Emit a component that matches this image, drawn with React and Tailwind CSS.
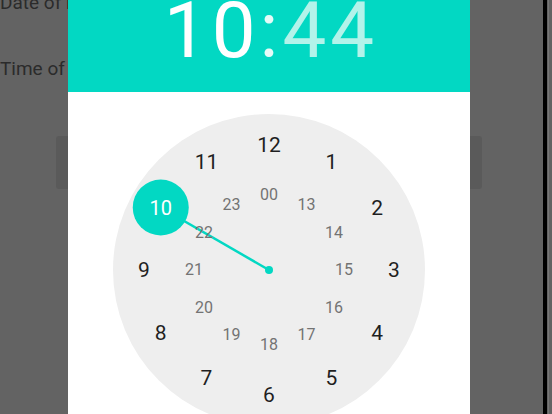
import React from 'react';

const TEAL = '#02d8c3';

const outer = [12, 1, 2, 3, 4, 5, 6, 7, 8, 9, 10, 11];
const inner = ['00', '13', '14', '15', '16', '17', '18', '19', '20', '21', '22', '23'];

function pos(i, r) {
  const a = (i * 30 * Math.PI) / 180;
  return { left: 156 + r * Math.sin(a), top: 156 - r * Math.cos(a) };
}

function ClockFace() {
  const sel = pos(10, 125);
  return (
    <div className="relative w-[312px] h-[312px] rounded-full bg-[#eeeeee] shrink-0">
      <svg className="absolute inset-0" width="312" height="312">
        <line x1="156" y1="156" x2={sel.left} y2={sel.top} stroke={TEAL} strokeWidth="2.5" />
        <circle cx="156" cy="156" r="4" fill={TEAL} />
        <circle cx={sel.left} cy={sel.top} r="28" fill={TEAL} />
      </svg>
      {inner.map((n, i) => (
        <span
          key={n}
          className="absolute -translate-x-1/2 -translate-y-1/2 text-[16px] leading-none text-[#737373]"
          style={pos(i, 75)}
        >
          {n}
        </span>
      ))}
      {outer.map((n, i) => (
        <span
          key={n}
          className={`absolute -translate-x-1/2 -translate-y-1/2 leading-none ${
            n === 10 ? 'text-[20px] text-white' : 'text-[21px] text-[#1f1f1f]'
          }`}
          style={pos(i, 125)}
        >
          {n}
        </span>
      ))}
    </div>
  );
}

export default function App() {
  return (
    <div
      className="relative w-[552px] h-[414px] overflow-hidden bg-[#636363]"
      style={{ fontFamily: 'Roboto, "Noto Sans", sans-serif' }}
    >
      {/* page behind the dim */}
      <div className="flex flex-col text-[19px] leading-none text-[#2b2b2b]">
        <p className="mt-[-7px]">Date of birth</p>
        <p className="mt-[47px]">Time of birth</p>
        <div className="ml-[56px] mt-[58px] w-[426px] h-[53px] rounded-[3px] bg-[#5a5a5a]" />
      </div>

      <div className="absolute top-0 right-[5px] w-[4px] h-full bg-black" />
      <div className="absolute top-0 right-[3px] w-[1px] h-full bg-[#777]" />

      {/* time picker dialog */}
      <div className="absolute left-[68px] top-0 w-[402px] h-[430px] bg-white flex flex-col items-center">
        <div className="w-full h-[92px] flex justify-center" style={{ backgroundColor: TEAL }}>
          <div className="mt-[-8px] ml-[4px] text-[78px] leading-none tracking-[4px]">
            <span className="text-white">10</span>
            <span className="text-[#e6fbf8]">:</span>
            <span className="text-[#b3f3ea]">44</span>
          </div>
        </div>
        <div className="mt-[22px]">
          <ClockFace />
        </div>
      </div>
    </div>
  );
}
